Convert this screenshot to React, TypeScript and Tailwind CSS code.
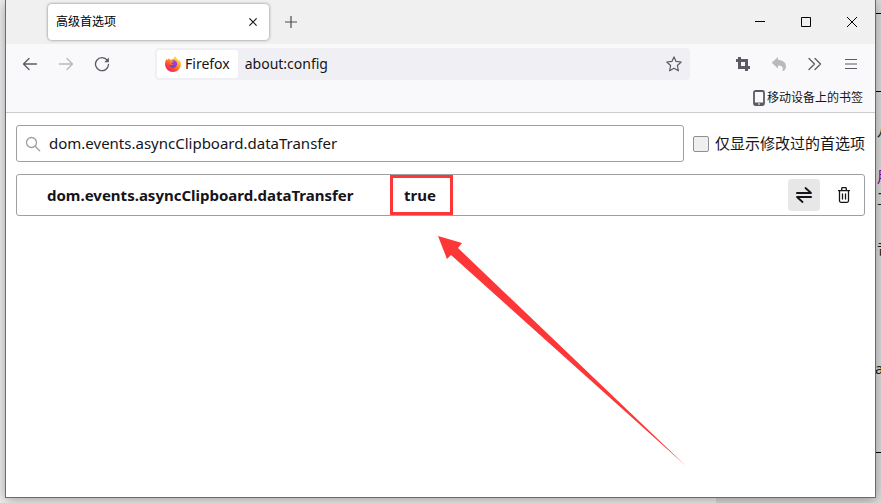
import { useState } from "react";

const ui = "font-['Noto_Sans','Noto_Sans_CJK_SC',sans-serif]";

function FirefoxLogo() {
  return (
    <svg width="16" height="16" viewBox="0 0 16 16" aria-hidden="true">
      <defs>
        <linearGradient id="fox" x1="0.85" y1="0.1" x2="0.2" y2="0.95">
          <stop offset="0" stopColor="#fff44f" />
          <stop offset="0.35" stopColor="#ffa02b" />
          <stop offset="0.65" stopColor="#ff5634" />
          <stop offset="1" stopColor="#f0145f" />
        </linearGradient>
        <linearGradient id="globe" x1="0.8" y1="0" x2="0.2" y2="1">
          <stop offset="0" stopColor="#b040e0" />
          <stop offset="1" stopColor="#5b42d6" />
        </linearGradient>
      </defs>
      <path
        d="M10.4 0C9.2.9 8.6 2.1 8.5 3.1 7.4 3.1 6.3 3.5 5.5 4.1 4.7 3.7 4.3 2.9 4.2 2.3 3.4 2.7 2.9 3.4 2.6 3.9L1.5 3.1C.5 4.8 0 6.6 0 8.3A8 7.7 0 0 0 16 8.3C16 6.2 15 4.5 14 3.7L14 5C13.4 3.2 10.6 2.4 10.4 0Z"
        fill="url(#fox)"
      />
      <path
        d="M8.3 4.3C10.7 4.1 12.3 6 12.2 8.1 12.1 10.5 10.4 11.9 8.2 11.9 5.8 11.9 4.5 10.3 4.5 8.5 5.8 9.6 7.8 9.2 8.6 8 7.6 8.3 6.6 7.8 6.2 7.1 6.8 6.5 8 6.6 8.4 6.1 8.5 5.9 7.7 5.5 7.1 4.8Z"
        fill="url(#globe)"
      />
    </svg>
  );
}

function BackIcon() {
  return (
    <svg width="16" height="16" viewBox="0 0 16 16" fill="none" stroke="currentColor" strokeWidth="1.3" strokeLinecap="round" strokeLinejoin="round" aria-hidden="true">
      <path d="M14.5 8H1.6M7 2.5 1.5 8 7 13.5" />
    </svg>
  );
}

function ReloadIcon() {
  return (
    <svg width="16" height="16" viewBox="0 0 16 16" fill="none" stroke="currentColor" strokeWidth="1.3" strokeLinecap="round" aria-hidden="true">
      <path d="M13.3 4.4A6.5 6.5 0 1 0 14.5 8.5" />
      <path d="M14.9 1.6v4.1a.5.5 0 0 1-.5.5h-4.1Z" fill="currentColor" stroke="none" />
    </svg>
  );
}

function StarIcon() {
  return (
    <svg width="16" height="16" viewBox="0 0 16 16" fill="none" stroke="currentColor" strokeWidth="1.2" strokeLinejoin="round" aria-hidden="true">
      <path d="M8 .9 10.1 5.4 15.2 6 11.4 9.5 12.4 14.8 8 12.2 3.6 14.8 4.6 9.5.8 6 5.9 5.4Z" />
    </svg>
  );
}

function CropIcon() {
  return (
    <svg width="16" height="16" viewBox="0 0 16 16" fill="none" stroke="currentColor" strokeWidth="3" aria-hidden="true">
      <path d="M1 4.5H11.500V15M4.500 1V11.500H15" />
    </svg>
  );
}

function UndoIcon() {
  return (
    <svg width="16" height="16" viewBox="0 0 16 16" fill="currentColor" aria-hidden="true">
      <path d="M7 1v3c4.600 0 8 2.400 8 6.400 0 2-1.100 3.800-2.800 4.600-.6.3-1-.3-.7-.8 1-2.600-.5-4.600-4.500-4.600v3L1.200 7.200a.8.8 0 0 1 0-1Z" />
    </svg>
  );
}

function OverflowIcon() {
  return (
    <svg width="16" height="16" viewBox="0 0 16 16" fill="none" stroke="currentColor" strokeWidth="1.3" strokeLinecap="round" strokeLinejoin="round" aria-hidden="true">
      <path d="M2 2.500 7.500 8 2 13.500M8 2.500 13.500 8 8 13.500" />
    </svg>
  );
}

function MenuIcon() {
  return (
    <svg width="16" height="16" viewBox="0 0 16 16" fill="none" stroke="currentColor" strokeWidth="1.2" aria-hidden="true">
      <path d="M2 3.500h12M2 8h12M2 12.500h12" />
    </svg>
  );
}

function PhoneIcon() {
  return (
    <svg width="12" height="16" viewBox="0 0 12 16" aria-hidden="true">
      <rect x="1" y="1" width="10" height="14" rx="1.5" fill="none" stroke="#5b5b66" strokeWidth="1.8" />
      <path d="M1 12.500h10v2.500H1Z" fill="#5b5b66" />
      <path d="M5 14h2" stroke="#fff" strokeWidth="1" />
    </svg>
  );
}

function ToggleIcon() {
  return (
    <svg width="16" height="16" viewBox="0 0 16 16" fill="none" stroke="currentColor" strokeWidth="1.8" strokeLinecap="round" strokeLinejoin="round" aria-hidden="true">
      <path d="M.9 6H15L9.500 1M15.100 10H1l5.500 5" />
    </svg>
  );
}

function TrashIcon() {
  return (
    <svg width="16" height="16" viewBox="0 0 16 16" fill="none" stroke="currentColor" strokeWidth="1.3" strokeLinecap="round" strokeLinejoin="round" aria-hidden="true">
      <path d="M2.500 3.600h11M5.700 3.400V1.600a1 1 0 0 1 1-1h2.600a1 1 0 0 1 1 1v1.800M3.500 3.800v10a1.500 1.500 0 0 0 1.500 1.500h6a1.500 1.500 0 0 0 1.500-1.500v-10M6.500 7v5M9.500 7v5" />
    </svg>
  );
}

function TitleBar() {
  return (
    <div className="flex h-11 items-center bg-[#f0f0f0] pl-[42px]">
      <div className="flex h-9 w-[221px] items-center justify-between rounded bg-white px-2 shadow-[0_0_3px_rgba(0,0,0,0.5)]">
        <span className="text-xs text-black">高级首选项</span>
        <button type="button" aria-label="关闭标签页" className="flex size-4 items-center justify-center text-[#15141a]">
          <svg width="8" height="8" viewBox="0 0 8 8" stroke="currentColor" strokeWidth="1.2">
            <path d="m.4.4 7.200 7.200M7.600.4.4 7.600" />
          </svg>
        </button>
      </div>
      <button type="button" aria-label="新建标签页" className="ml-3 flex size-5 items-center justify-center text-[#4a4a55]">
        <svg width="12" height="12" viewBox="0 0 12 12" stroke="currentColor" strokeWidth="1.2">
          <path d="M0 6h12M6 0v12" />
        </svg>
      </button>
      <div className="ml-auto flex self-stretch text-black">
        <button type="button" aria-label="最小化" className="flex w-[46px] items-center justify-center">
          <svg width="10" height="10" stroke="currentColor">
            <path d="M0 4.500h10" />
          </svg>
        </button>
        <button type="button" aria-label="最大化" className="flex w-[46px] items-center justify-center">
          <svg width="10" height="10" fill="none" stroke="currentColor">
            <path d="M.5.5h9v9h-9Z" />
          </svg>
        </button>
        <button type="button" aria-label="关闭" className="flex w-[46px] items-center justify-center">
          <svg width="10" height="10" stroke="currentColor">
            <path d="m0 0 10 10M10 0 0 10" />
          </svg>
        </button>
      </div>
    </div>
  );
}

function NavBar() {
  return (
    <div className="flex h-10 items-center px-4 text-[#5b5b66]">
      <div className="flex gap-5">
        <button type="button" aria-label="后退"><BackIcon /></button>
        <button type="button" aria-label="前进" className="-scale-x-100 opacity-40"><BackIcon /></button>
        <button type="button" aria-label="重新加载"><ReloadIcon /></button>
      </div>
      <div className="ml-[45px] flex h-8 flex-1 items-center rounded bg-[#f0f0f4] pr-2 pl-[2px]">
        <div className="flex h-7 items-center gap-1 rounded-[3px] bg-white px-2 text-sm text-[#15141a]">
          <FirefoxLogo />
          <span>Firefox</span>
        </div>
        <input
          aria-label="地址栏"
          defaultValue="about:config"
          className="ml-[7px] min-w-0 flex-1 bg-transparent text-sm text-[#15141a] outline-none"
        />
        <button type="button" aria-label="添加书签"><StarIcon /></button>
      </div>
      <div className="ml-[45px] flex gap-5">
        <button type="button" aria-label="截图"><CropIcon /></button>
        <button type="button" aria-label="撤销" className="opacity-40"><UndoIcon /></button>
        <button type="button" aria-label="更多工具"><OverflowIcon /></button>
        <button type="button" aria-label="菜单"><MenuIcon /></button>
      </div>
    </div>
  );
}

function Arrow() {
  return (
    <svg width="248" height="231" viewBox="0 0 248 231" className="pointer-events-none absolute top-[58px] left-[45px]" aria-hidden="true">
      <path d="M0 0 24 7 20 12 248 230 13 19 9 23Z" fill="#fd3737" />
    </svg>
  );
}

export default function App() {
  const [query, setQuery] = useState("dom.events.asyncClipboard.dataTransfer");
  const [value, setValue] = useState(true);

  return (
    <div className={`relative flex min-h-screen overflow-hidden bg-[#f0f0f0] pb-[5px] pl-[5px] ${ui}`}>
      {/* page that shows behind the window */}
      <div className="absolute inset-y-0 right-0 w-[165px] overflow-hidden bg-[#dcdcdc] text-[15px] leading-5 text-[#222]">
        <div className="absolute top-[13px] right-0 h-px w-4 bg-black" />
        <div className="absolute top-[91px] right-0 h-px w-4 bg-black" />
        <div className="absolute top-[452px] right-0 h-px w-4 bg-black" />
        <div className="absolute top-[120px] left-[161px]">八</div>
        <div className="absolute top-[166px] left-[161px] text-[#770088]">用</div>
        <div className="absolute top-[188px] left-[161px]">工</div>
        <div className="absolute top-[238px] left-[161px]">音</div>
        <div className="absolute top-[358px] left-[159px]">a</div>
      </div>

      <div className="relative mr-[5px] flex min-w-0 flex-1 flex-col border border-t-0 border-[#6b6b6b] bg-white shadow-[0_2px_12px_rgba(0,0,0,0.35)]">
        <header className="border-b border-[#cccccc] bg-[#f9f9fb]">
          <TitleBar />
          <NavBar />
          <div className="flex h-7 items-center justify-end pr-3">
            <a href="#mobile" className="flex items-center gap-[2px] text-xs text-[#15141a]">
              <PhoneIcon />
              移动设备上的书签
            </a>
          </div>
        </header>

        <main className="px-[10px] pt-3 text-[#15141a]">
          <div className="flex items-center gap-[9px]">
            <div className="flex h-[37px] flex-1 items-center gap-2 rounded-[3px] border border-[#9f9fa3] px-2">
              <svg width="16" height="16" viewBox="0 0 16 16" fill="none" stroke="#9f9fa3" strokeWidth="1.3" strokeLinecap="round" aria-hidden="true">
                <circle cx="6.500" cy="6.500" r="5" />
                <path d="m10.200 10.200 4.500 4.500" />
              </svg>
              <input
                aria-label="搜索首选项名称"
                value={query}
                onChange={(e) => setQuery(e.target.value)}
                className="min-w-0 flex-1 bg-transparent text-[15px] outline-none"
              />
            </div>
            <label className="flex items-center gap-[6px] text-[15px]">
              <input type="checkbox" className="size-4 appearance-none rounded-[2px] border border-[#8f8f94] bg-[#efeff1]" />
              仅显示修改过的首选项
            </label>
          </div>

          <table className="mt-3 w-full table-fixed border-separate border-spacing-0 rounded-[3px] border border-[#9f9fa3] text-[15px]">
            <tbody>
              <tr className="h-10">
                <th scope="row" className="w-[373px] p-0 pl-[30px] text-left font-bold">
                  dom.events.asyncClipboard.dataTransfer
                </th>
                <td className="p-0 font-bold">
                  <div className="relative flex h-10 w-[63px] items-center border-3 border-[#fd3737] pl-[11px]">
                    {String(value)}
                    <Arrow />
                  </div>
                </td>
                <td className="w-[76px] p-0">
                  <div className="flex gap-2">
                    <button
                      type="button"
                      aria-label="切换"
                      onClick={() => setValue(!value)}
                      className="flex size-8 items-center justify-center rounded bg-[#e7e7e7]"
                    >
                      <ToggleIcon />
                    </button>
                    <button type="button" aria-label="删除" className="flex size-8 items-center justify-center rounded">
                      <TrashIcon />
                    </button>
                  </div>
                </td>
              </tr>
            </tbody>
          </table>
        </main>
      </div>
    </div>
  );
}
